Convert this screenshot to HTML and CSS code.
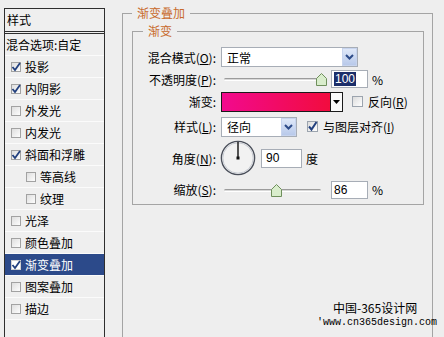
FILE: index.html
```html
<!DOCTYPE html>
<html lang="zh-CN">
<head>
  <meta charset="UTF-8">
  <title>图层样式 - 渐变叠加</title>
  <link rel="stylesheet" href="styles.css">
</head>
<body>
  <div class="dialog">
    <!-- 左侧样式列表 -->
    <div class="styles-list">
      <div class="list-head">样式</div>
      <div class="list-row plain">混合选项:自定</div>
      <div class="list-row"><span class="chk"><svg width="10" height="10" viewBox="0 0 10 10"><path d="M1.5 5l2.5 3 5-7" fill="none" stroke="#22407e" stroke-width="1.8"/></svg></span>投影</div>
      <div class="list-row"><span class="chk"><svg width="10" height="10" viewBox="0 0 10 10"><path d="M1.5 5l2.5 3 5-7" fill="none" stroke="#22407e" stroke-width="1.8"/></svg></span>内阴影</div>
      <div class="list-row"><span class="chk"></span>外发光</div>
      <div class="list-row"><span class="chk"></span>内发光</div>
      <div class="list-row"><span class="chk"><svg width="10" height="10" viewBox="0 0 10 10"><path d="M1.5 5l2.5 3 5-7" fill="none" stroke="#22407e" stroke-width="1.8"/></svg></span>斜面和浮雕</div>
      <div class="list-row sub"><span class="chk"></span>等高线</div>
      <div class="list-row sub"><span class="chk"></span>纹理</div>
      <div class="list-row"><span class="chk"></span>光泽</div>
      <div class="list-row"><span class="chk"></span>颜色叠加</div>
      <div class="list-row selected"><span class="chk"><svg width="10" height="10" viewBox="0 0 10 10"><path d="M1.5 5l2.5 3 5-7" fill="none" stroke="#22407e" stroke-width="1.8"/></svg></span>渐变叠加</div>
      <div class="list-row"><span class="chk"></span>图案叠加</div>
      <div class="list-row"><span class="chk"></span>描边</div>
    </div>

    <!-- 右侧设置 -->
    <fieldset class="group outer">
      <legend>渐变叠加</legend>
      <fieldset class="group inner">
        <legend>渐变</legend>

        <div class="row h22">
          <span class="lbl">混合模式(<u>O</u>):</span>
          <div class="combo combo-wide">
            <span class="combo-val">正常</span>
            <span class="combo-btn"><svg width="9" height="6" viewBox="0 0 9 6"><path d="M1 1l3.5 3.5L8 1" fill="none" stroke="#2d4b88" stroke-width="2"/></svg></span>
          </div>
        </div>

        <div class="row h22">
          <span class="lbl">不透明度(<u>P</u>):</span>
          <div class="slider">
            <div class="track"></div>
            <svg class="thumb" style="left: 95px" width="11" height="13" viewBox="0 0 11 13"><path d="M0.5 12.5V5.5L5.5 0.5L10.5 5.5V12.5Z" fill="#d9edcc" stroke="#6f8f5c"/></svg>
          </div>
          <div class="num"><span class="hl">100</span></div>
          <span class="unit">%</span>
        </div>

        <div class="row h23">
          <span class="lbl">渐变:</span>
          <div class="grad"></div>
          <span class="grad-btn"><svg width="7" height="4" viewBox="0 0 7 4"><path d="M0 0h7L3.5 4z" fill="#000"/></svg></span>
          <span class="cb cb-reverse"></span>
          <span class="cb-text">反向(<u>R</u>)</span>
        </div>

        <div class="row h27">
          <span class="lbl">样式(<u>L</u>):</span>
          <div class="combo combo-short">
            <span class="combo-val">径向</span>
            <span class="combo-btn"><svg width="9" height="6" viewBox="0 0 9 6"><path d="M1 1l3.5 3.5L8 1" fill="none" stroke="#2d4b88" stroke-width="2"/></svg></span>
          </div>
          <span class="cb cb-align"><svg width="11" height="11" viewBox="0 0 11 11"><path d="M2 5.5l2.5 3L9.5 1" fill="none" stroke="#22407e" stroke-width="2"/></svg></span>
          <span class="cb-text">与图层对齐(<u>I</u>)</span>
        </div>

        <div class="row h36">
          <span class="lbl">角度(<u>N</u>):</span>
          <svg class="dial" width="36" height="36" viewBox="0 0 36 36">
            <circle cx="18" cy="18" r="16.6" fill="#f2f2f2" stroke="#4b505b" stroke-width="1.4"/>
            <circle cx="18" cy="18" r="15.2" fill="none" stroke="#c8ccd3" stroke-width="1"/>
            <line x1="18" y1="18" x2="18" y2="2" stroke="#111" stroke-width="1.4"/>
            <rect x="16.5" y="16.5" width="3" height="3" fill="#111"/>
          </svg>
          <div class="num num-angle">90</div>
          <span class="unit">度</span>
        </div>

        <div class="row h27">
          <span class="lbl">缩放(<u>S</u>):</span>
          <div class="slider">
            <div class="track"></div>
            <svg class="thumb" style="left: 50px" width="11" height="13" viewBox="0 0 11 13"><path d="M0.5 12.5V5.5L5.5 0.5L10.5 5.5V12.5Z" fill="#d9edcc" stroke="#6f8f5c"/></svg>
          </div>
          <div class="num">86</div>
          <span class="unit">%</span>
        </div>
      </fieldset>
    </fieldset>
  </div>

  <!-- 水印 -->
  <div class="watermark">
    <div class="wm-title">中国-365设计网</div>
    <div class="wm-url">'www.cn365design.com</div>
  </div>
</body>
</html>
```

FILE: styles.css
```css
body {
  margin: 0;
  width: 444px;
  height: 337px;
  overflow: hidden;
  background-color: #eeeeee;
  font-family: "Noto Sans CJK SC", "Liberation Sans", sans-serif;
  font-size: 12px;
  color: #000;
  position: relative;
}
.dialog {
  display: flex;
  align-items: flex-start;
}

/* 左侧列表 */
.styles-list {
  margin: 8px 0 0 4px;
  width: 101px;
  height: 329px;
  box-sizing: border-box;
  border: 1px solid #2e2e2e;
  border-bottom: none;
  background-color: #efefef;
}
.list-head {
  height: 22px;
  line-height: 22px;
  padding-left: 2px;
  border-bottom: 3px double #2e2e2e;
}
.list-row {
  height: 21px;
  line-height: 21px;
  border-bottom: 1px solid #fbfbfb;
  display: flex;
  align-items: center;
  padding-left: 6px;
}
.list-row.plain {
  padding-left: 1px;
}
.list-row.sub {
  padding-left: 21px;
}
.list-row.selected {
  background-color: #2c4a8a;
  color: #fff;
}
.chk {
  width: 10px;
  height: 10px;
  box-sizing: border-box;
  border: 1px solid #a2a2a2;
  background: linear-gradient(135deg, #dedede, #fdfdfd);
  margin-right: 4px;
  display: flex;
  align-items: center;
  justify-content: center;
}
.chk svg {
  flex: none;
}
.selected .chk {
  background: #fff;
  border-color: #d0d0d0;
}

/* 分组框 */
.group {
  border: 1px solid #a4a4a4;
  margin: 0;
  min-width: 0;
}
.group legend {
  color: #c86a2c;
  line-height: 16px;
  padding: 0 5px;
}
.outer {
  margin: 5px 0 0 17px;
  width: 311px;
  height: 340px;
  box-sizing: border-box;
  padding: 0 8px 0 9px;
  border-bottom: none;
}
.inner {
  margin-top: 2px;
  padding: 7px 0 1px 0;
}
.inner legend {
  margin-left: 10px;
}

.row {
  display: flex;
  align-items: center;
}
.h22 { height: 22px; }
.h23 { height: 23px; }
.h27 { height: 27px; }
.h36 { height: 36px; }

.lbl {
  width: 83px;
  text-align: right;
  margin-right: 5px;
  white-space: nowrap;
}

/* 下拉框 */
.combo {
  height: 20px;
  box-sizing: border-box;
  border: 1px solid #a7adb6;
  background-color: #fff;
  display: flex;
  align-items: center;
  justify-content: space-between;
}
.combo-wide {
  width: 137px;
}
.combo-short {
  width: 76px;
}
.combo-val {
  padding-left: 5px;
}
.combo-btn {
  width: 15px;
  height: 18px;
  box-sizing: border-box;
  border: 1px solid #c7d4ee;
  background: linear-gradient(#dfe8f8, #b8c9ea);
  display: flex;
  align-items: center;
  justify-content: center;
}

/* 滑块 */
.slider {
  width: 110px;
  height: 16px;
  position: relative;
}
.track {
  position: absolute;
  left: 3px;
  right: 10px;
  top: 7px;
  height: 1px;
  border-top: 1px solid #9b9b9b;
  border-bottom: 1px solid #fff;
  border-radius: 2px;
  background-color: #d8d8d8;
}
.thumb {
  position: absolute;
  top: 2px;
}

/* 数值框 */
.num {
  width: 37px;
  height: 18px;
  box-sizing: border-box;
  border: 1px solid #a7adb6;
  background-color: #fff;
  padding-left: 2px;
  line-height: 16px;
  font-family: "Liberation Sans", sans-serif;
}
.num-angle {
  width: 41px;
  height: 19px;
  margin-left: 5px;
  padding-left: 4px;
}
.hl {
  background-color: #1b2e6a;
  color: #fff;
  padding: 0 1px;
}
.unit {
  margin-left: 4px;
}

/* 渐变条 */
.grad {
  width: 110px;
  height: 20px;
  box-sizing: border-box;
  border: 1px solid #1a1a1a;
  background: linear-gradient(to right, #f20a8e, #f20c3e);
}
.grad-btn {
  width: 12px;
  height: 20px;
  box-sizing: border-box;
  border: 1px solid #1a1a1a;
  border-left: none;
  background-color: #fafafa;
  display: flex;
  align-items: center;
  justify-content: center;
}

/* 复选框 */
.cb {
  width: 11px;
  height: 11px;
  box-sizing: border-box;
  border: 1px solid #9ca4ae;
  background: linear-gradient(135deg, #dcdcdc, #ffffff);
  display: flex;
  align-items: center;
  justify-content: center;
}
.cb svg {
  flex: none;
}
.cb-reverse {
  margin-left: 9px;
}
.cb-align {
  margin-left: 10px;
}
.cb-text {
  margin-left: 5px;
  white-space: nowrap;
}

.dial {
  margin-left: -1px;
}

/* 水印 */
.watermark {
  position: absolute;
  left: 317px;
  top: 299px;
  white-space: nowrap;
}
.wm-title {
  padding-left: 16px;
  line-height: 18px;
  font-size: 12px;
}
.wm-url {
  font-family: "Liberation Mono", monospace;
  font-size: 10px;
  line-height: 12px;
}
```
